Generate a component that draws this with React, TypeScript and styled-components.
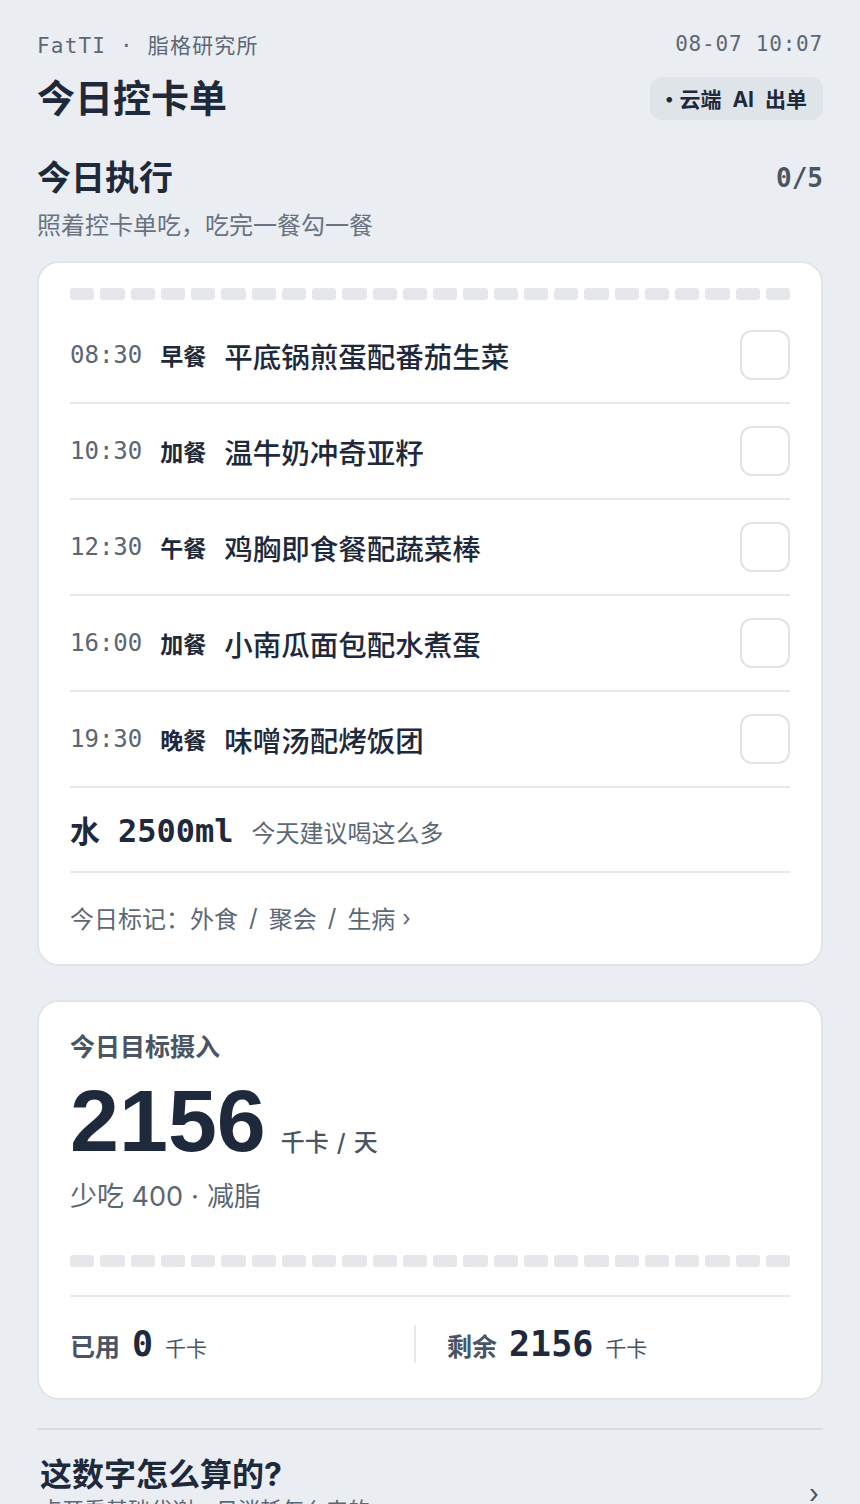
import { FC } from "react";
import styled, { createGlobalStyle } from "styled-components";

const GlobalStyle = createGlobalStyle`
  html, body {
    margin: 0;
    padding: 0;
    background: #eaeef2;
  }
  body {
    font-family: Inter, "Noto Sans CJK SC", sans-serif;
    color: #1e293b;
  }
`;

const MONO = `"DejaVu Sans Mono", "Noto Sans CJK SC", monospace`;

interface IMeal {
  time: string;
  label: string;
  dish: string;
}

const meals: IMeal[] = [
  { time: "08:30", label: "早餐", dish: "平底锅煎蛋配番茄生菜" },
  { time: "10:30", label: "加餐", dish: "温牛奶冲奇亚籽" },
  { time: "12:30", label: "午餐", dish: "鸡胸即食餐配蔬菜棒" },
  { time: "16:00", label: "加餐", dish: "小南瓜面包配水煮蛋" },
  { time: "19:30", label: "晚餐", dish: "味噌汤配烤饭团" },
];

const DashStrip: FC<{ after?: number }> = ({ after = 0 }) => (
  <Strip after={after}>
    {Array.from({ length: 24 }).map((_, i) => (
      <Dash key={i} />
    ))}
  </Strip>
);

const App: FC = () => {
  return (
    <Page>
      <GlobalStyle />
      <TopLine>
        <Brand>FatTI · 脂格研究所</Brand>
        <span>08-07 10:07</span>
      </TopLine>
      <TitleRow>
        <PageTitle>今日控卡单</PageTitle>
        <Badge>
          <BadgeDot>•</BadgeDot>云端 AI 出单
        </Badge>
      </TitleRow>

      <SectionHead>
        <SectionTitle>今日执行</SectionTitle>
        <Progress>0/5</Progress>
      </SectionHead>
      <SectionSub>照着控卡单吃，吃完一餐勾一餐</SectionSub>

      <Card>
        <DashStrip after={8} />
        {meals.map((m) => (
          <MealRow key={m.time}>
            <MealTime>{m.time}</MealTime>
            <MealLabel>{m.label}</MealLabel>
            <MealDish>{m.dish}</MealDish>
            <CheckBox />
          </MealRow>
        ))}
        <WaterRow>
          <WaterValue>
            水<WaterNum>2500ml</WaterNum>
          </WaterValue>
          <WaterHint>今天建议喝这么多</WaterHint>
        </WaterRow>
        <MarkRow>
          今日标记：外食<Sep>/</Sep>聚会<Sep>/</Sep>生病<MarkArrow>›</MarkArrow>
        </MarkRow>
      </Card>

      <TargetCard>
        <TargetLabel>今日目标摄入</TargetLabel>
        <BigLine>
          <BigNum>2156</BigNum>
          <BigUnit>
            千卡<Sep>/</Sep>天
          </BigUnit>
        </BigLine>
        <TargetNote>
          少吃 400<Sep>·</Sep>减脂
        </TargetNote>
        <StripWrap>
          <DashStrip />
        </StripWrap>
        <StatRow>
          <Stat>
            <StatLabel>已用</StatLabel>
            <StatNum>0</StatNum>
            <StatUnit>千卡</StatUnit>
          </Stat>
          <StatDivider />
          <Stat right>
            <StatLabel>剩余</StatLabel>
            <StatNum>2156</StatNum>
            <StatUnit>千卡</StatUnit>
          </Stat>
        </StatRow>
      </TargetCard>

      <Rule />
      <ExplainRow>
        <div>
          <ExplainTitle>这数字怎么算的?</ExplainTitle>
          <ExplainSub>点开看基础代谢、日消耗怎么来的</ExplainSub>
        </div>
        <Chevron>›</Chevron>
      </ExplainRow>
    </Page>
  );
};

export default App;

const Page = styled.div`
  padding: 28px 37px 0;
  height: 1504px;
  box-sizing: border-box;
  overflow: hidden;
`;

const TopLine = styled.div`
  display: flex;
  justify-content: space-between;
  align-items: center;
  height: 32px;
  font-family: ${MONO};
  font-size: 21px;
  letter-spacing: 0.8px;
  color: #5d6876;
`;

const Brand = styled.span`
  letter-spacing: 1.2px;
`;

const TitleRow = styled.div`
  display: flex;
  justify-content: space-between;
  align-items: center;
  margin-top: 15px;
  height: 46px;
`;

const PageTitle = styled.h1`
  margin: 0;
  font-size: 38px;
  line-height: 46px;
  font-weight: 700;
  color: #1e293b;
`;

const Badge = styled.div`
  display: flex;
  align-items: center;
  height: 43px;
  padding: 0 16px 0 15px;
  border-radius: 12px;
  background: #dfe4e9;
  font-size: 21px;
  font-weight: 700;
  word-spacing: 6px;
  color: #1e293b;
`;

const BadgeDot = styled.span`
  margin-right: 6px;
  font-size: 18px;
`;

const SectionHead = styled.div`
  display: flex;
  justify-content: space-between;
  align-items: center;
  margin-top: 36px;
  height: 42px;
`;

const SectionTitle = styled.h2`
  margin: 0;
  font-size: 34px;
  line-height: 42px;
  font-weight: 700;
  color: #1e293b;
`;

const Progress = styled.span`
  font-family: ${MONO};
  font-size: 26px;
  font-weight: 700;
  color: #4a5563;
`;

const SectionSub = styled.div`
  margin-top: 12px;
  font-size: 24px;
  line-height: 30px;
  color: #687280;
`;

const Card = styled.div`
  margin-top: 20px;
  background: #fff;
  border: 2px solid #e1e5ea;
  border-radius: 22px;
  padding: 25px 31px 0;
`;

const Strip = styled.div<{ after: number }>`
  display: flex;
  gap: 6px;
  height: 12px;
  margin-bottom: ${(p) => p.after}px;
`;

const Dash = styled.div`
  flex: 1;
  border-radius: 3px;
  background: #e5e7ea;
`;

const MealRow = styled.div`
  display: flex;
  align-items: center;
  height: 94px;
  border-bottom: 2px solid #e5e8ec;
`;

const MealTime = styled.span`
  font-family: ${MONO};
  font-size: 24px;
  color: #5b6673;
  margin-right: 18px;
`;

const MealLabel = styled.span`
  font-size: 23px;
  font-weight: 700;
  color: #1e293b;
  margin-right: 18px;
`;

const MealDish = styled.span`
  flex: 1;
  font-size: 28.5px;
  font-weight: 500;
  color: #1e293b;
`;

const CheckBox = styled.div`
  width: 50px;
  height: 50px;
  box-sizing: border-box;
  border: 2px solid #e0e3e7;
  border-radius: 12px;
`;

const WaterRow = styled.div`
  display: flex;
  align-items: baseline;
  gap: 18px;
  padding-top: 19px;
  height: 64px;
  border-bottom: 2px solid #e5e8ec;
`;

const WaterValue = styled.span`
  font-size: 30px;
  font-weight: 700;
  color: #1e293b;
`;

const WaterNum = styled.span`
  font-family: ${MONO};
  font-size: 32px;
  font-weight: 700;
  margin-left: 18px;
`;

const WaterHint = styled.span`
  font-size: 24px;
  color: #5d6876;
`;

const MarkRow = styled.div`
  display: flex;
  align-items: center;
  height: 89px;
  padding-bottom: 2px;
  font-size: 24px;
  color: #5d6876;
`;

const Sep = styled.span`
  margin: 0 11px;
`;

const MarkArrow = styled.span`
  margin-left: 7px;
  font-size: 22px;
`;

const TargetCard = styled.div`
  margin-top: 34px;
  background: #fff;
  border: 2px solid #e1e5ea;
  border-radius: 22px;
  padding: 29px 31px 0;
`;

const TargetLabel = styled.div`
  font-size: 25px;
  line-height: 32px;
  font-weight: 700;
  color: #4a5563;
`;

const BigLine = styled.div`
  display: flex;
  align-items: baseline;
  gap: 15px;
  margin-top: 14px;
`;

const BigNum = styled.span`
  font-family: "Liberation Sans", Arial, sans-serif;
  font-size: 88px;
  line-height: 1;
  font-weight: 700;
  color: #1e293b;
`;

const BigUnit = styled.span`
  font-size: 24px;
  font-weight: 500;
  color: #4a5563;
  & > span {
    margin: 0 8px;
  }
`;

const TargetNote = styled.div`
  margin-top: 15px;
  font-size: 27px;
  line-height: 34px;
  color: #5b6673;
  & > span {
    margin: 0 8px;
  }
`;

const StripWrap = styled.div`
  margin-top: 41px;
  padding-bottom: 28px;
  border-bottom: 2px solid #e5e8ec;
`;

const StatRow = styled.div`
  display: flex;
  align-items: center;
  height: 93px;
  padding-bottom: 8px;
`;

const Stat = styled.div<{ right?: boolean }>`
  display: flex;
  align-items: baseline;
  gap: 12px;
  flex: ${(p) => (p.right ? "1" : "0 0 344px")};
  padding-left: ${(p) => (p.right ? "31px" : "0")};
`;

const StatDivider = styled.div`
  width: 2px;
  height: 38px;
  background: #e5e8ec;
`;

const StatLabel = styled.span`
  font-size: 25px;
  font-weight: 700;
  color: #4a5563;
`;

const StatNum = styled.span`
  font-family: ${MONO};
  font-size: 35px;
  font-weight: 700;
  color: #1e293b;
`;

const StatUnit = styled.span`
  font-size: 21px;
  color: #4a5563;
`;

const Rule = styled.div`
  margin-top: 28px;
  height: 2px;
  background: #d9dde2;
`;

const ExplainRow = styled.div`
  display: flex;
  justify-content: space-between;
  align-items: center;
  margin-top: 25px;
  padding-left: 3px;
`;

const ExplainTitle = styled.div`
  font-size: 32px;
  line-height: 40px;
  font-weight: 700;
  color: #1e293b;
`;

const ExplainSub = styled.div`
  font-size: 22px;
  line-height: 30px;
  color: #5d6876;
`;

const Chevron = styled.span`
  font-size: 26px;
  line-height: 30px;
  color: #4a5563;
  margin-right: 4px;
  margin-top: 8px;
`;
